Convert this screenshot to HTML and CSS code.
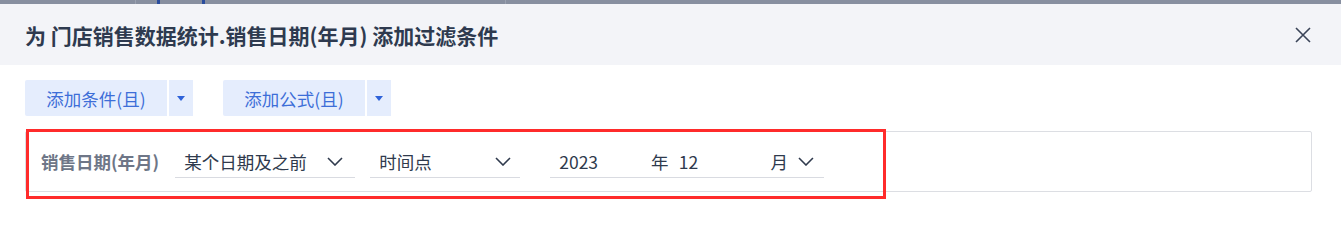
FILE: index.html
```html
<!DOCTYPE html>
<html lang="zh-CN">
<head>
    <meta charset="UTF-8">
    <title>添加过滤条件</title>
    <link rel="stylesheet" href="styles.css">
</head>
<body>
    <div class="top-strip">
        <span class="mark mark-light" style="left: 135px"></span>
        <span class="mark" style="left: 157px"></span>
        <span class="mark" style="left: 202px"></span>
        <span class="mark mark-light" style="left: 505px"></span>
    </div>
    <header class="dialog-header">
        <span class="dialog-title">为 门店销售数据统计.销售日期(年月) 添加过滤条件</span>
        <svg class="close" width="16" height="16" viewBox="0 0 16 16">
            <path d="M1 1 L15 15 M15 1 L1 15" stroke="#3a4458" stroke-width="1.6" fill="none"/>
        </svg>
    </header>

    <div class="toolbar">
        <div class="split-btn">
            <span class="btn-main">添加条件(且)</span>
            <span class="btn-drop"><i class="caret"></i></span>
        </div>
        <div class="split-btn">
            <span class="btn-main">添加公式(且)</span>
            <span class="btn-drop"><i class="caret"></i></span>
        </div>
    </div>

    <div class="filter-box">
        <span class="field-label">销售日期(年月)</span>
        <div class="select select-op">
            <span>某个日期及之前</span>
            <svg class="chevron" width="16" height="9" viewBox="0 0 16 9"><path d="M1 1 L8 8 L15 1" stroke="#2f3a4d" stroke-width="1.6" fill="none"/></svg>
        </div>
        <div class="select select-type">
            <span>时间点</span>
            <svg class="chevron" width="16" height="9" viewBox="0 0 16 9"><path d="M1 1 L8 8 L15 1" stroke="#2f3a4d" stroke-width="1.6" fill="none"/></svg>
        </div>
        <div class="select select-date">
            <span class="date-num">2023</span>
            <span class="date-unit">年</span>
            <span class="date-num">12</span>
            <span class="date-unit">月</span>
            <svg class="chevron" width="16" height="9" viewBox="0 0 16 9"><path d="M1 1 L8 8 L15 1" stroke="#2f3a4d" stroke-width="1.6" fill="none"/></svg>
        </div>
    </div>

    <div class="highlight"></div>
</body>
</html>
```

FILE: styles.css
```css
html, body {
    height: 100%;
}
body {
    margin: 0;
    min-height: 246px;
    background: #fff;
    font-family: "Noto Sans CJK SC", "Noto Sans", sans-serif;
    color: #2f3a4d;
    position: relative;
}
.top-strip {
    height: 4px;
    background: #878fa0;
    position: relative;
}
.mark {
    position: absolute;
    top: 0;
    width: 3px;
    height: 4px;
    background: #2a4d9e;
}
.mark-light {
    width: 1px;
    background: #9aa1b0;
}
.dialog-header {
    height: 61px;
    background: #f3f4f8;
    display: flex;
    align-items: center;
    justify-content: space-between;
    padding: 0 30px 0 25px;
}
.dialog-title {
    font-size: 21px;
    font-weight: bold;
    color: #2e3a4f;
}
.close {
    display: block;
}
.toolbar {
    display: flex;
    gap: 30px;
    padding: 15px 0 0 25px;
}
.split-btn {
    display: flex;
    gap: 2px;
    height: 36px;
}
.btn-main {
    width: 142px;
    background: #e5edfd;
    color: #3d6ed8;
    font-size: 17.5px;
    display: flex;
    align-items: center;
    justify-content: center;
    border-radius: 2px 0 0 2px;
}
.btn-drop {
    width: 24px;
    background: #e5edfd;
    display: flex;
    align-items: center;
    justify-content: center;
}
.caret {
    width: 0;
    height: 0;
    border-left: 4.5px solid transparent;
    border-right: 4.5px solid transparent;
    border-top: 5px solid #2e62d9;
}
.filter-box {
    margin: 15px 29px 0 25px;
    height: 59px;
    border: 1px solid #dcdee3;
    border-radius: 2px;
    display: flex;
    align-items: center;
    padding-left: 15px;
}
.field-label {
    font-size: 17.5px;
    font-weight: bold;
    color: #6e7687;
    margin-right: 16px;
}
.select {
    height: 33px;
    border-bottom: 1px solid #d9dbe1;
    display: flex;
    align-items: center;
    justify-content: space-between;
    font-size: 17.5px;
    box-sizing: border-box;
    padding: 0 12px 0 9px;
}
.select-op {
    width: 180px;
    margin-right: 15px;
}
.select-type {
    width: 150px;
    margin-right: 30px;
    padding-right: 9px;
}
.select-date {
    width: 274px;
    justify-content: flex-start;
    padding-right: 10px;
}
.date-num {
    width: 92px;
}
.date-unit {
    width: 28px;
}
.select-date .chevron {
    margin-left: auto;
}
.highlight {
    position: absolute;
    left: 26px;
    top: 129px;
    width: 854px;
    height: 64px;
    border: 3px solid #ff2b2b;
}
```
